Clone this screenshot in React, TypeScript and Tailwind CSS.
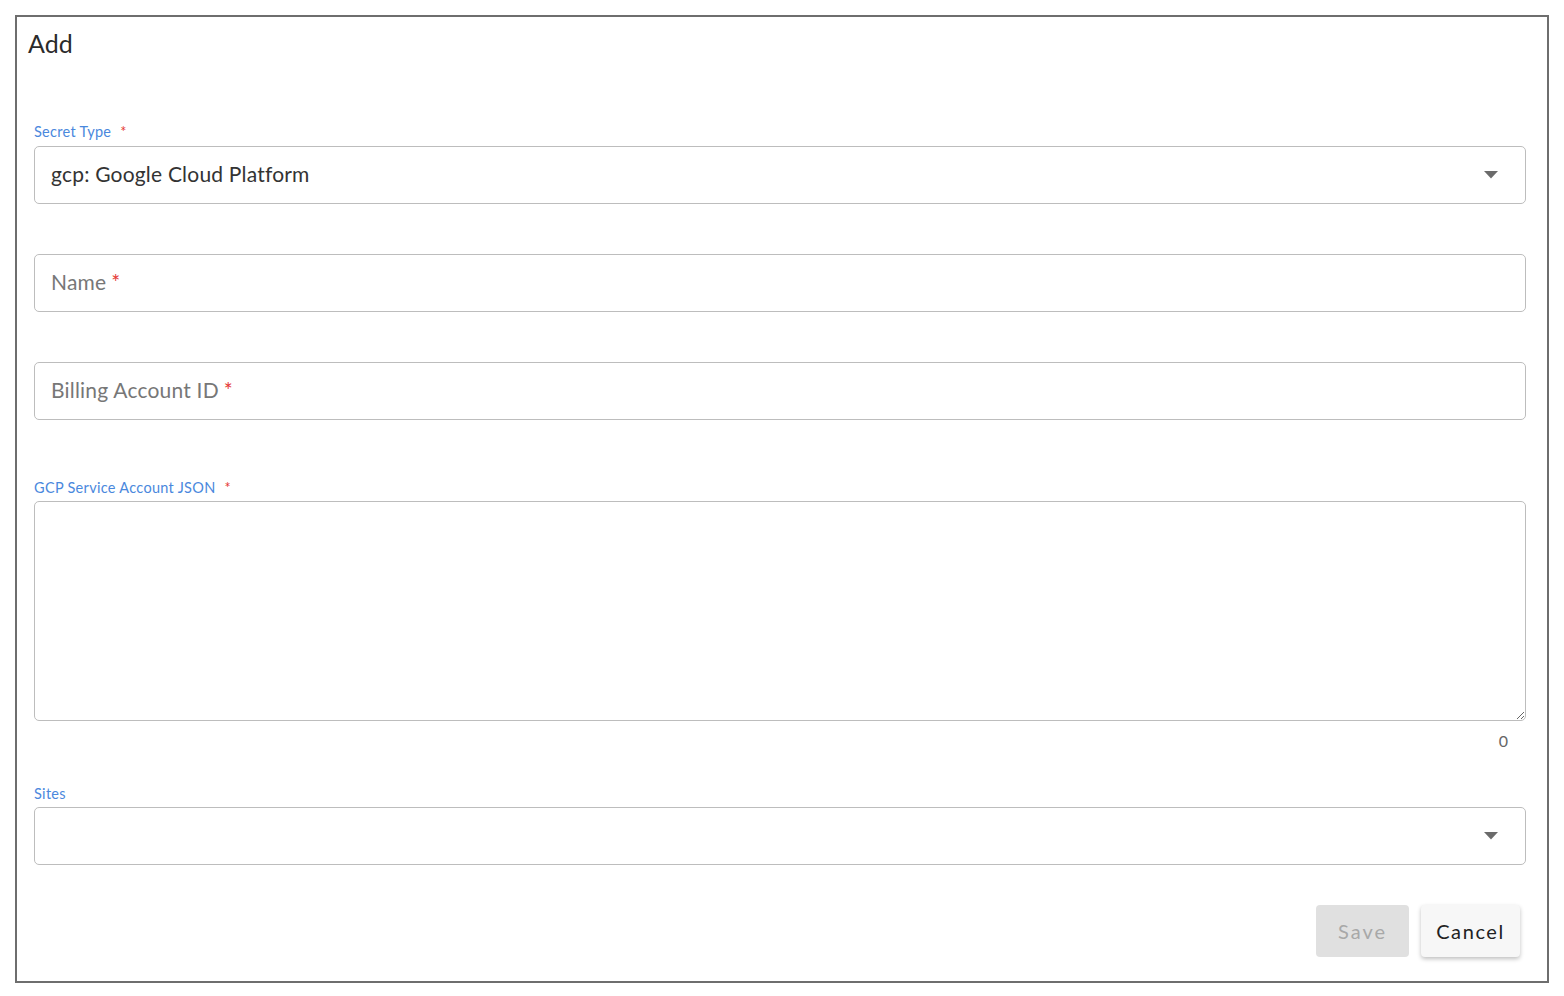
import { useState } from "react";

function Caret() {
  return (
    <svg width="14" height="8" viewBox="0 0 14 8" className="shrink-0">
      <path d="M0 0 L14 0 L7 7.5 Z" fill="#6b6b6b" />
    </svg>
  );
}

function FieldLabel({ text, required }: { text: string; required?: boolean }) {
  return (
    <div className="h-5 pt-[2px] flex items-center text-[14.5px] leading-5 tracking-[0.3px] text-[#4a88dd]">
      <span>{text}</span>
      {required && <span className="ml-[9px] text-[#e53935]">*</span>}
    </div>
  );
}

function Box({ children, caret }: { children?: React.ReactNode; caret?: boolean }) {
  return (
    <div className="h-[58px] flex items-center pl-[16px] pr-[27px] border-[1.5px] border-[#bdbdbd] rounded-[5px] bg-white">
      <div className="flex-1 pb-[2px] text-[21px] tracking-[0.2px]">{children}</div>
      {caret && <Caret />}
    </div>
  );
}

export default function App() {
  const [json, setJson] = useState("");

  return (
    <div
      className="w-[1564px] h-[996px] bg-white p-[15px] text-[#333]"
      style={{ fontFamily: "Lato, 'Open Sans', sans-serif" }}
    >
      <div className="h-[968px] border-2 border-[#6e6e6e] pl-[17px] pr-[21px] pt-[10px]">
        <h1 className="-ml-[6px] text-[25px] leading-8 text-[#2b2b2b]">Add</h1>

        <div className="mt-[62px]">
          <FieldLabel text="Secret Type" required />
          <div className="mt-[5px]">
            <Box caret>
              <span className="text-[#333]">gcp: Google Cloud Platform</span>
            </Box>
          </div>
        </div>

        <div className="mt-[50px]">
          <Box>
            <span className="text-[#777]">Name</span>
            <span className="ml-[5px] text-[#e53935]">*</span>
          </Box>
        </div>

        <div className="mt-[50px]">
          <Box>
            <span className="text-[#777]">Billing Account ID</span>
            <span className="ml-[5px] text-[#e53935]">*</span>
          </Box>
        </div>

        <div className="mt-[57px]">
          <FieldLabel text="GCP Service Account JSON" required />
          <textarea
            value={json}
            onChange={(e) => setJson(e.target.value)}
            className="mt-[4px] block w-full h-[220px] border-[1.5px] border-[#bdbdbd] rounded-[5px] px-4 py-3 text-[16px] outline-none resize-y"
          />
          <div className="mt-[10px] pr-[18px] text-right text-[16px] leading-5 text-[#666]">
            {json.length}
          </div>
        </div>

        <div className="mt-[32px]">
          <FieldLabel text="Sites" />
          <div className="mt-[4px]">
            <Box caret />
          </div>
        </div>

        <div className="mt-[40px] flex justify-end gap-[12px] pr-[6px]">
          <button
            disabled
            className="w-[93px] h-[52px] rounded-[4px] bg-[#e0e0e0] text-[20px] tracking-[2px] text-[#a8a8a8]"
          >
            Save
          </button>
          <button className="w-[99px] h-[52px] rounded-[4px] bg-[#f7f7f7] text-[20px] tracking-[1.6px] text-[#222] shadow-[0_2px_4px_rgba(0,0,0,0.25)]">
            Cancel
          </button>
        </div>
      </div>
    </div>
  );
}
